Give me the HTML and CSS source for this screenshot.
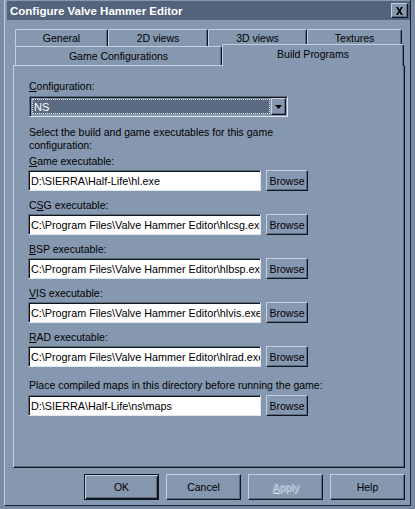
FILE: index.html
```html
<!DOCTYPE html>
<html lang="en">

<head>
    <meta charset="UTF-8">
    <title>Configure Valve Hammer Editor</title>
    <link rel="stylesheet" href="styles.css">
</head>

<body>

    <div class="window">
        <div class="titlebar">
            <span class="title">Configure Valve Hammer Editor</span>
            <span class="close">
                <svg width="9" height="8" viewBox="0 0 9 8">
                    <path d="M1 0h2l1.5 2.5L6 0h2L5.5 4L8 8H6L4.5 5.5L3 8H1l2.5-4z" fill="#000"/>
                </svg>
            </span>
        </div>

        <div class="tabs">
            <div class="tab-row back">
                <div class="tab tab-general">General</div>
                <div class="tab tab-2d">2D views</div>
                <div class="tab tab-3d">3D views</div>
                <div class="tab tab-textures">Textures</div>
            </div>
            <div class="tab-row front">
                <div class="tab tab-games">Game Configurations</div>
                <div class="tab tab-build active">Build Programs</div>
            </div>
        </div>

        <div class="panel">
            <div class="label"><u>C</u>onfiguration:</div>
            <div class="combo">
                <div class="combo-value"><span>NS</span></div>
                <div class="combo-btn">
                    <svg width="7" height="4" viewBox="0 0 7 4"><path d="M0 0h7L3.5 4z" fill="#000"/></svg>
                </div>
            </div>

            <p class="intro">Select the build and game executables for this game configuration:</p>

            <div class="row">
                <div class="label"><u>G</u>ame executable:</div>
                <div class="path-row">
                    <input class="field" type="text" value="D:\SIERRA\Half-Life\hl.exe" readonly>
                    <button class="btn browse">Browse</button>
                </div>
            </div>
            <div class="row">
                <div class="label">C<u>S</u>G executable:</div>
                <div class="path-row">
                    <input class="field" type="text" value="C:\Program Files\Valve Hammer Editor\hlcsg.exe" readonly>
                    <button class="btn browse">Browse</button>
                </div>
            </div>
            <div class="row">
                <div class="label"><u>B</u>SP executable:</div>
                <div class="path-row">
                    <input class="field" type="text" value="C:\Program Files\Valve Hammer Editor\hlbsp.exe" readonly>
                    <button class="btn browse">Browse</button>
                </div>
            </div>
            <div class="row">
                <div class="label"><u>V</u>IS executable:</div>
                <div class="path-row">
                    <input class="field" type="text" value="C:\Program Files\Valve Hammer Editor\hlvis.exe" readonly>
                    <button class="btn browse">Browse</button>
                </div>
            </div>
            <div class="row">
                <div class="label"><u>R</u>AD executable:</div>
                <div class="path-row">
                    <input class="field" type="text" value="C:\Program Files\Valve Hammer Editor\hlrad.exe" readonly>
                    <button class="btn browse">Browse</button>
                </div>
            </div>

            <div class="row maps">
                <div class="label">Place compiled maps in this directory before running the game:</div>
                <div class="path-row">
                    <input class="field" type="text" value="D:\SIERRA\Half-Life\ns\maps" readonly>
                    <button class="btn browse">Browse</button>
                </div>
            </div>
        </div>

        <div class="buttons">
            <button class="btn dlg default">OK</button>
            <button class="btn dlg">Cancel</button>
            <button class="btn dlg disabled"><u>A</u>pply</button>
            <button class="btn dlg">Help</button>
        </div>
    </div>

</body>

</html>
```

FILE: styles.css
```css
body {
    margin: 0;
    width: 415px;
    height: 509px;
    overflow: hidden;
    background-color: #7a8ba3;
    font-family: "Liberation Sans", Arial, sans-serif;
    font-size: 10.5px;
    color: #000;
}

.window {
    box-sizing: border-box;
    width: 407px;
    height: 506px;
    margin-left: 4px;
    padding: 1px 0 0 2px;
    background-color: #8698b0;
    border-left: 1px solid #c4d0e0;
    border-right: 1px solid #1a2130;
    border-bottom: 1px solid #1a2130;
}

/* title bar */

.titlebar {
    display: flex;
    align-items: center;
    justify-content: space-between;
    height: 19px;
    padding: 0 2px 0 3px;
    background-color: #53637b;
}

.title {
    color: #fff;
    font-weight: bold;
    font-size: 11.5px;
}

.close {
    display: flex;
    align-items: center;
    justify-content: center;
    box-sizing: border-box;
    width: 17px;
    height: 15px;
    background-color: #8698b0;
    border: 1px solid;
    border-color: #c4d0e0 #10141c #10141c #c4d0e0;
    box-shadow: inset -1px -1px #5c6a80;
}

/* tabs */

.tabs {
    margin: 9px 0 0 8px;
}

.tab-row {
    display: flex;
}

.tab-row.front {
    align-items: flex-end;
    height: 19px;
}

.tab {
    box-sizing: border-box;
    height: 17px;
    line-height: 16px;
    text-align: center;
    border-top: 1px solid #c4d0e0;
    border-left: 1px solid #c4d0e0;
    border-right: 1px solid #10141c;
    border-radius: 2px 2px 0 0;
    box-shadow: inset -1px 0 #5c6a80;
    background-color: #8698b0;
}

.tab-general { width: 93px; }
.tab-2d { width: 100px; }
.tab-3d { width: 99px; }
.tab-textures { width: 95px; }

.tab-games {
    width: 207px;
    height: 19px;
    line-height: 19px;
}

.tab-build {
    width: 182px;
}

.tab.active {
    position: relative;
    z-index: 1;
    height: 22px;
    line-height: 18px;
    margin-bottom: -1px;
}

/* property page */

.panel {
    box-sizing: border-box;
    width: 392px;
    height: 403px;
    margin-left: 6px;
    padding: 14px 0 0 15px;
    border: 1px solid;
    border-color: #c4d0e0 #10141c #10141c #c4d0e0;
    box-shadow: inset -1px -1px #5c6a80;
}

.label {
    height: 13px;
    line-height: 13px;
    white-space: nowrap;
}

.combo {
    display: flex;
    box-sizing: border-box;
    width: 259px;
    height: 21px;
    margin-top: 3px;
    padding: 1px;
    border: 1px solid;
    border-color: #5c6a80 #dfe6ef #dfe6ef #5c6a80;
    box-shadow: inset 1px 1px #10141c;
}

.combo-value {
    flex: 1;
    display: flex;
    align-items: center;
    margin: 1px;
    padding-left: 2px;
    background-color: #5b6b82;
    color: #fff;
    font-size: 11px;
    outline: 1px dotted #dfe6ef;
    outline-offset: -1px;
}

.combo-btn {
    display: flex;
    align-items: center;
    justify-content: center;
    box-sizing: border-box;
    width: 15px;
    border: 1px solid;
    border-color: #c4d0e0 #10141c #10141c #c4d0e0;
    box-shadow: inset -1px -1px #5c6a80;
}

.intro {
    width: 260px;
    margin: 9px 0 3px 0;
    line-height: 13px;
}

.row {
    margin-bottom: 8px;
}

.row.maps {
    margin-top: 12px;
}

.row.maps .label {
    margin-bottom: 3px;
}

.path-row {
    display: flex;
    gap: 5px;
    margin-top: 2px;
}

.field {
    box-sizing: border-box;
    width: 233px;
    height: 21px;
    margin: 0 0 0 -1px;
    padding: 0 0 0 2px;
    font-family: inherit;
    font-size: 10.8px;
    color: #000;
    background-color: #fff;
    border: 1px solid;
    border-color: #5c6a80 #dfe6ef #dfe6ef #5c6a80;
    box-shadow: inset 1px 1px #10141c;
    outline: none;
}

.btn {
    box-sizing: border-box;
    padding: 0;
    font-family: inherit;
    font-size: 10.5px;
    color: #000;
    background-color: #8698b0;
    border: 1px solid;
    border-color: #c4d0e0 #10141c #10141c #c4d0e0;
    box-shadow: inset -1px -1px #5c6a80;
}

.browse {
    width: 42px;
    height: 21px;
}

/* dialog buttons */

.buttons {
    display: flex;
    justify-content: flex-end;
    gap: 7px;
    margin-top: 6px;
    padding-right: 5px;
}

.dlg {
    width: 75px;
    height: 26px;
}

.dlg.default {
    border-color: #10141c;
    box-shadow: inset 1px 1px #c4d0e0, inset -1px -1px #10141c, inset -2px -2px #5c6a80;
}

.dlg.disabled {
    color: #aab6c8;
    text-shadow: 1px 1px #d6dee9;
}
```
